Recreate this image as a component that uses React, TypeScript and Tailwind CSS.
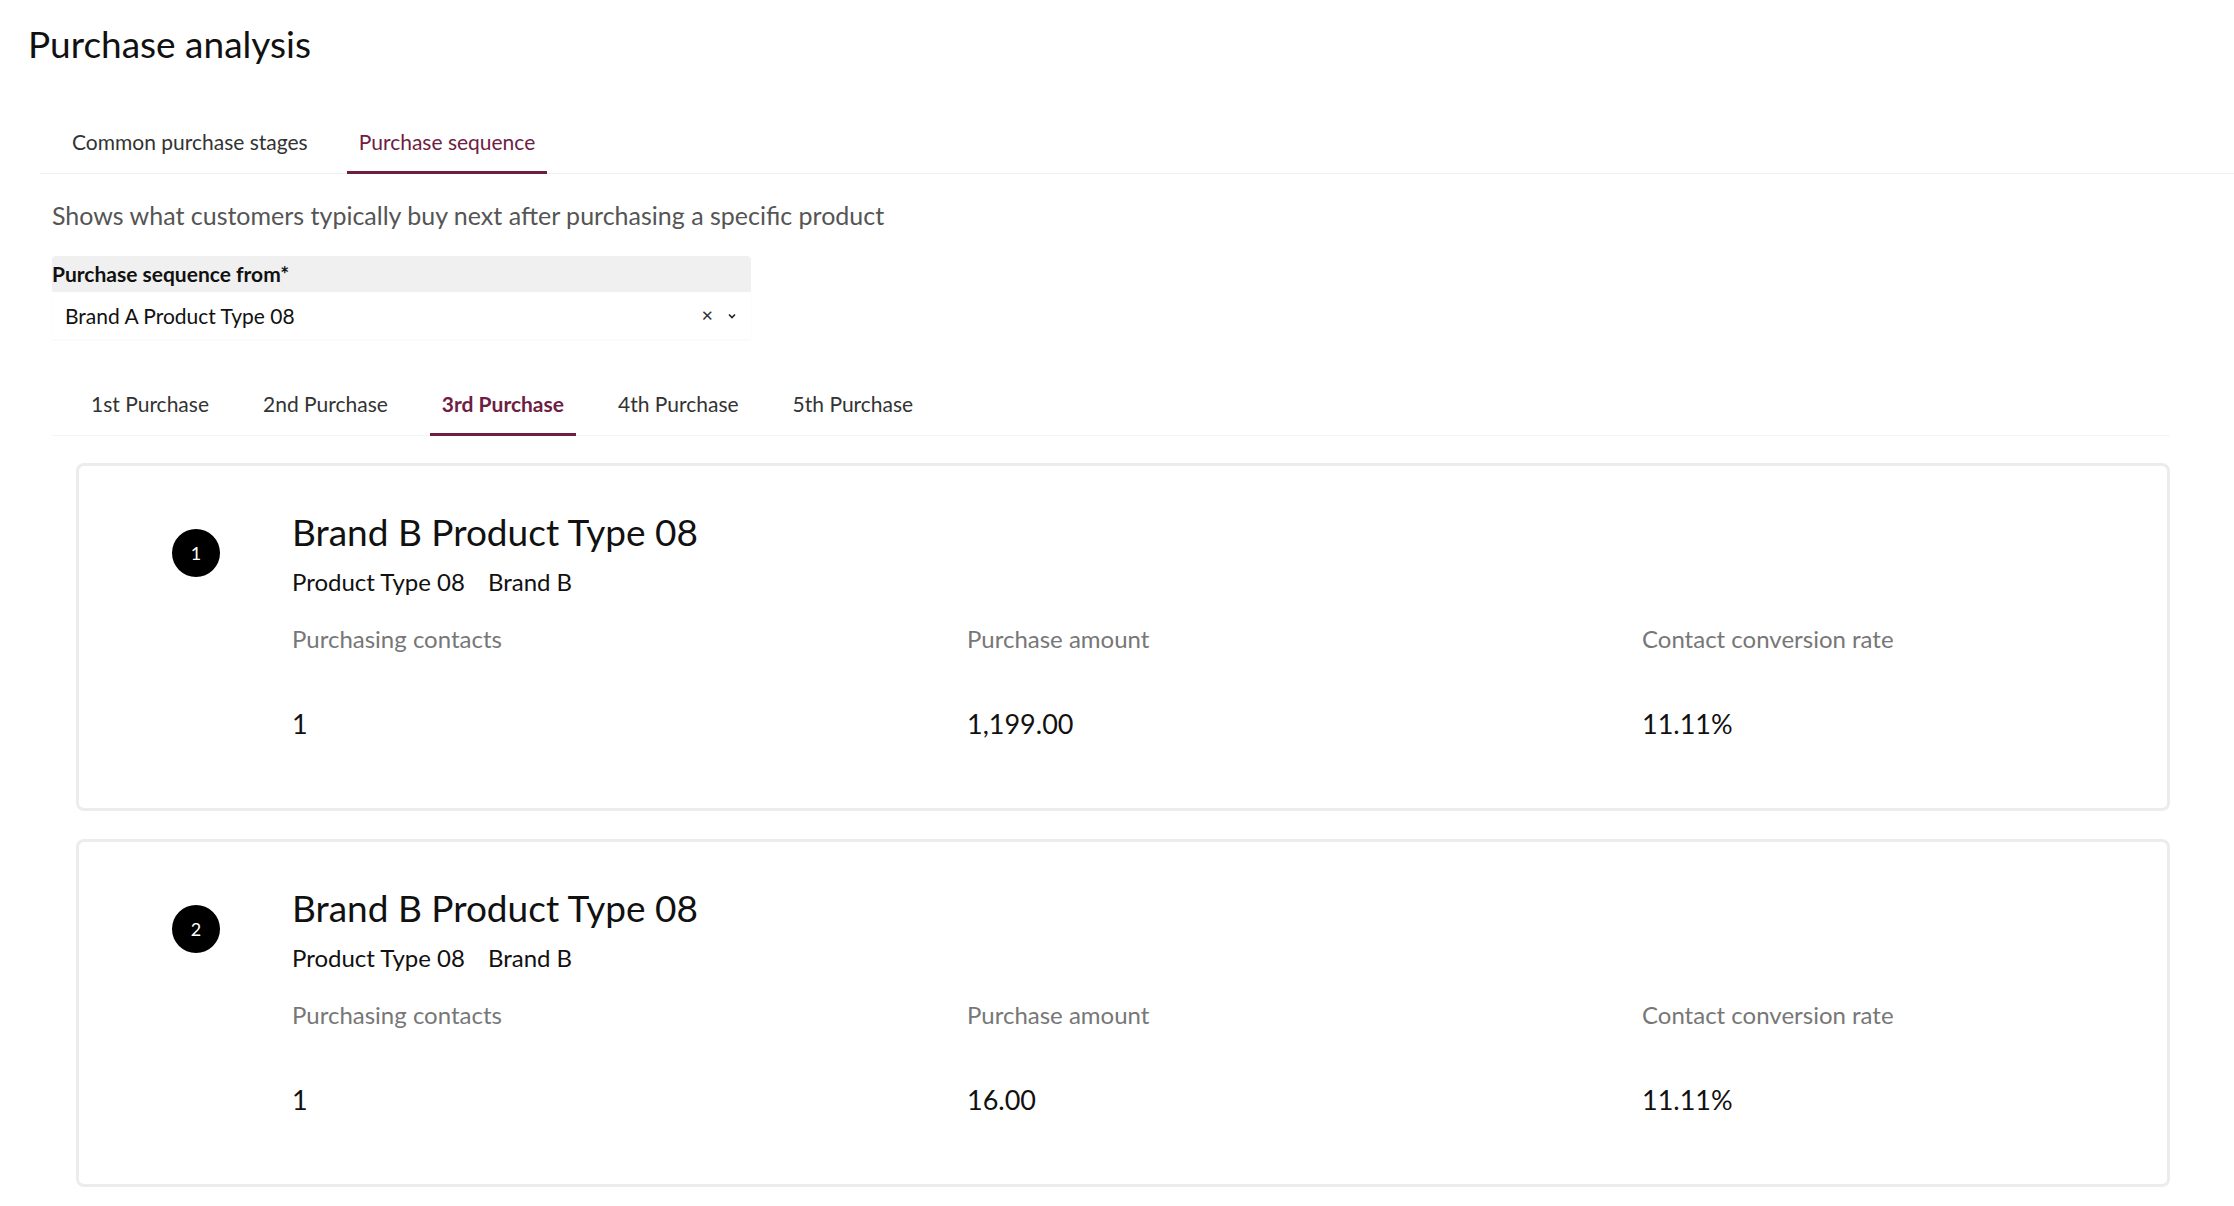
import React from "react";

const Card = ({ n, amount }: { n: number; amount: string }) => (
  <div className="border-[3px] border-[#ececec] rounded-lg h-[348px] flex pt-[43px]">
    <div className="w-[213px] pl-[93px] pt-[20px] shrink-0">
      <div className="w-[48px] h-[48px] rounded-full bg-black text-white flex items-center justify-center text-[18px]">{n}</div>
    </div>
    <div className="flex-1">
      <div className="text-[37px] leading-[46px] text-[#111]">Brand B Product Type 08</div>
      <div className="text-[24px] leading-[32px] mt-[11px] text-[#111] flex gap-[23px]"><span>Product Type 08</span><span>Brand B</span></div>
      <div className="grid grid-cols-[675px_675px_1fr] mt-[25px] text-[24px] text-[#777] leading-[32px]">
        <span>Purchasing contacts</span><span>Purchase amount</span><span>Contact conversion rate</span>
      </div>
      <div className="grid grid-cols-[675px_675px_1fr] mt-[51px] text-[27px] text-[#111] leading-[36px]">
        <span>1</span><span>{amount}</span><span>11.11%</span>
      </div>
    </div>
  </div>
);

export default function App() {
  const tabs = ["1st Purchase", "2nd Purchase", "3rd Purchase", "4th Purchase", "5th Purchase"];
  return (
    <div className="w-[2234px] h-[1206px] bg-white overflow-hidden" style={{ fontFamily: "Lato, 'Open Sans', sans-serif" }}>
      <div className="px-[28px] pt-[22px] text-[37px] leading-[44px] text-[#111]">Purchase analysis</div>
      <div className="ml-[40px] mt-[56px] h-[52px] border-b border-[#f0f0f0] flex text-[21px]">
        <div className="pl-[32px] pt-[6px] text-[#333] leading-[28px]">Common purchase stages</div>
        <div className="px-[12px] ml-[39px] pt-[6px] text-[#6e1e43] leading-[28px] border-b-[3px] border-[#6e1e43] h-[52px] -mb-[1px]">Purchase sequence</div>
      </div>
      <div className="ml-[52px] mt-[24px] text-[25px] text-[#555] leading-[34px]">Shows what customers typically buy next after purchasing a specific product</div>
      <div className="ml-[52px] mt-[24px] w-[699px]">
        <div className="bg-[#f0f0f0] rounded-t h-[36px] flex items-center text-[21px] font-bold text-[#111]">Purchase sequence from*</div>
        <div className="h-[47px] flex items-center px-[13px] text-[21px] text-[#111] shadow-[0_1px_2px_rgba(0,0,0,0.04)]">
          <span className="flex-1">Brand A Product Type 08</span>
          <span className="text-[15px] text-[#333] mr-[12px]">✕</span>
          <svg width="12" height="12" viewBox="0 0 12 12"><path d="M3 4.5 6 7.5 9 4.5" stroke="#222" strokeWidth="1.6" fill="none" /></svg>
        </div>
      </div>
      <div className="ml-[52px] mr-[64px] mt-[50px] h-[47px] border-b border-[#f4f4f4] flex text-[21px] pl-[27px]">
        {tabs.map((t, i) => (
          <div key={t} className={`px-[12px] mr-[30px] leading-[30px] h-[47px] -mb-[1px] ${i === 2 ? "text-[#6e1e43] font-bold border-b-[3px] border-[#6e1e43]" : "text-[#333]"}`}>{t}</div>
        ))}
      </div>
      <div className="ml-[76px] mr-[64px] mt-[27px] flex flex-col gap-[28px]">
        <Card n={1} amount="1,199.00" />
        <Card n={2} amount="16.00" />
      </div>
    </div>
  );
}
